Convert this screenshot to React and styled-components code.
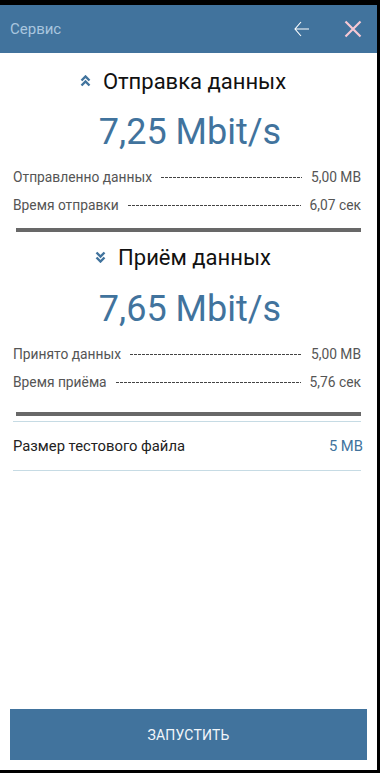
import styled, { createGlobalStyle } from "styled-components";

const GlobalStyle = createGlobalStyle`
  html, body {
    margin: 0;
    padding: 0;
    background: #000;
  }
  body {
    font-family: Roboto, "Noto Sans", sans-serif;
  }
`;

const Screen = styled.div`
  box-sizing: border-box;
  width: 380px;
  height: 773px;
  padding: 5px 3px 3px 0;
  display: flex;
  flex-direction: column;
`;

const Page = styled.div`
  flex: 1;
  display: flex;
  flex-direction: column;
  background: #fff;
`;

const TopBar = styled.div`
  height: 48px;
  display: flex;
  align-items: center;
  padding: 0 15px 0 10px;
  background: #41739d;
`;

const TopTitle = styled.div`
  flex: 1;
  font-size: 15px;
  color: #a9c6df;
`;

const IconButton = styled.div`
  display: flex;
  align-items: center;
  justify-content: center;
  margin-left: ${(p) => p.$gap || 0}px;
`;

const Content = styled.div`
  flex: 1;
  display: flex;
  flex-direction: column;
  padding: 0 16px 0 13px;
`;

const SectionTitle = styled.div`
  display: flex;
  align-items: center;
  justify-content: center;
  gap: 12px;
  margin-top: ${(p) => p.$top}px;
  padding-right: 8px;
  height: 28px;
  font-size: 22px;
  color: #111;
`;

const Speed = styled.div`
  text-align: center;
  font-size: 36px;
  color: #41739d;
  margin-top: ${(p) => p.$top}px;
  padding-left: 6px;
  height: 42px;
  line-height: 42px;
`;

const Stats = styled.div`
  margin-top: 15px;
  display: flex;
  flex-direction: column;
  gap: 10px;
`;

const StatRow = styled.div`
  display: flex;
  align-items: center;
  height: 18px;
  font-size: 13.8px;
  color: #555;
`;

const Dots = styled.div`
  flex: 1;
  height: 1px;
  margin: 1px 9px 0 9px;
  background: repeating-linear-gradient(
    to right,
    #444 0 3px,
    transparent 3px 4px
  );
`;

const ThickRule = styled.div`
  height: 4px;
  margin: ${(p) => p.$top}px 0 0 3px;
  background: #686868;
`;

const ThinRule = styled.div`
  height: 1px;
  background: #c6dbe4;
  margin-top: ${(p) => p.$top}px;
`;

const SettingRow = styled.div`
  display: flex;
  align-items: center;
  justify-content: space-between;
  height: 48px;
  font-size: 14.8px;
  color: #222;
`;

const SettingValue = styled.span`
  color: #41739d;
  margin-right: -2px;
`;

const Footer = styled.div`
  padding: 0 10px 10px 10px;
`;

const StartButton = styled.button`
  width: 100%;
  height: 51px;
  border: none;
  background: #41739d;
  color: #f2f6fa;
  font-family: Roboto, sans-serif;
  font-size: 14px;
  letter-spacing: 0.2px;
`;

const ChevronsUp = () => (
  <svg width="11" height="12" viewBox="0 0 11 12">
    <path d="M1.5 5.5 L5.5 1.5 L9.5 5.5" fill="none" stroke="#41739d" strokeWidth="2.4" />
    <path d="M1.5 10.5 L5.5 6.5 L9.5 10.5" fill="none" stroke="#41739d" strokeWidth="2.4" />
  </svg>
);

const ChevronsDown = () => (
  <svg width="11" height="12" viewBox="0 0 11 12">
    <path d="M1.5 1.5 L5.5 5.5 L9.5 1.5" fill="none" stroke="#41739d" strokeWidth="2.4" />
    <path d="M1.5 6.5 L5.5 10.5 L9.5 6.5" fill="none" stroke="#41739d" strokeWidth="2.4" />
  </svg>
);

const BackArrow = () => (
  <svg width="16" height="18" viewBox="0 0 16 18">
    <path d="M15 9 H1.5 M7 2 L1 9 L7 16" fill="none" stroke="#fff" strokeWidth="1.1" />
  </svg>
);

const CloseIcon = () => (
  <svg width="18" height="18" viewBox="0 0 18 18">
    <path d="M1.5 1.5 L16.5 16.5 M16.5 1.5 L1.5 16.5" fill="none" stroke="#f6c8d4" strokeWidth="2.2" />
  </svg>
);

const Stat = ({ label, value }) => (
  <StatRow>
    <span>{label}</span>
    <Dots />
    <span>{value}</span>
  </StatRow>
);

export default function App() {
  return (
    <>
      <GlobalStyle />
      <Screen>
        <TopBar>
          <TopTitle>Сервис</TopTitle>
          <IconButton>
            <BackArrow />
          </IconButton>
          <IconButton $gap={34}>
            <CloseIcon />
          </IconButton>
        </TopBar>
        <Page>
          <Content>
            <SectionTitle $top={14}>
              <ChevronsUp />
              <span>Отправка данных</span>
            </SectionTitle>
            <Speed $top={16}>7,25 Mbit/s</Speed>
            <Stats>
              <Stat label="Отправленно данных" value="5,00 MB" />
              <Stat label="Время отправки" value="6,07 сек" />
            </Stats>
            <ThickRule $top={14} />
            <SectionTitle $top={11}>
              <ChevronsDown />
              <span>Приём данных</span>
            </SectionTitle>
            <Speed $top={17}>7,65 Mbit/s</Speed>
            <Stats>
              <Stat label="Принято данных" value="5,00 MB" />
              <Stat label="Время приёма" value="5,76 сек" />
            </Stats>
            <ThickRule $top={21} />
            <ThinRule $top={5} />
            <SettingRow>
              <span>Размер тестового файла</span>
              <SettingValue>5 MB</SettingValue>
            </SettingRow>
            <ThinRule $top={0} />
          </Content>
          <Footer>
            <StartButton>ЗАПУСТИТЬ</StartButton>
          </Footer>
        </Page>
      </Screen>
    </>
  );
}
